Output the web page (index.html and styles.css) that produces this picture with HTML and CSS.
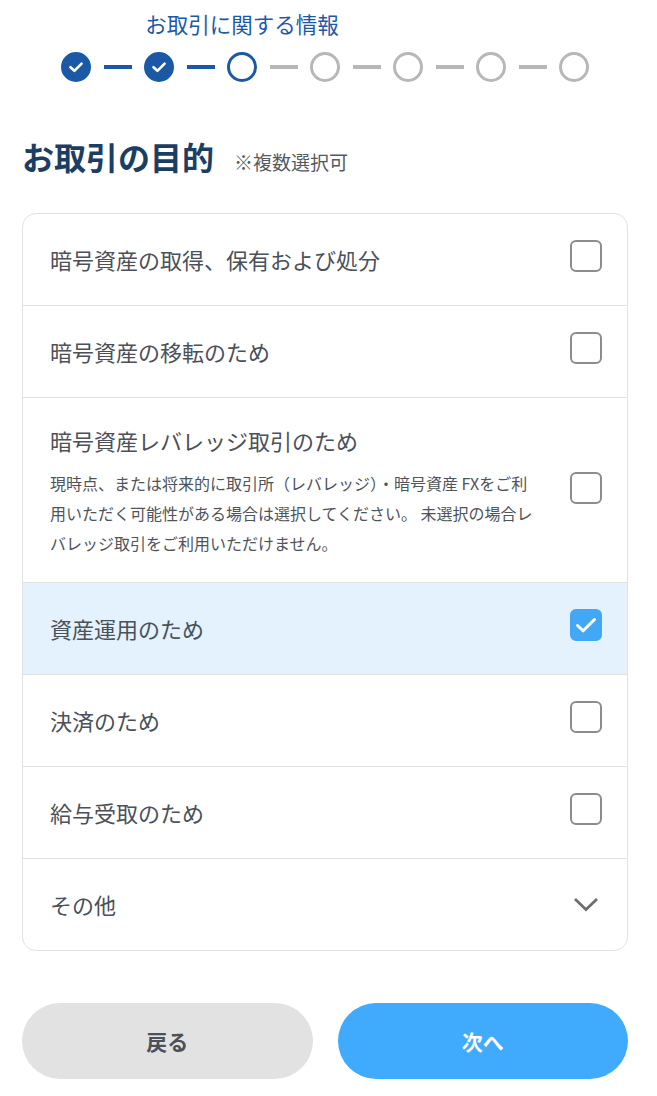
FILE: index.html
```html
<!DOCTYPE html>
<html lang="ja">
<head>
<meta charset="utf-8">
<title>お取引の目的</title>
<link rel="stylesheet" href="styles.css">
</head>
<body>
<main class="page">
  <div class="stepper">
    <div class="step done"><svg viewBox="0 0 30 30" class="step-check"><path d="M9.5 15.2 L13.4 18.8 L20.6 11.6"/></svg></div>
    <div class="bar done"></div>
    <div class="step done"><svg viewBox="0 0 30 30" class="step-check"><path d="M9.5 15.2 L13.4 18.8 L20.6 11.6"/></svg></div>
    <div class="bar done"></div>
    <div class="step current"><span class="step-label">お取引に関する情報</span></div>
    <div class="bar"></div>
    <div class="step"></div>
    <div class="bar"></div>
    <div class="step"></div>
    <div class="bar"></div>
    <div class="step"></div>
    <div class="bar"></div>
    <div class="step"></div>
  </div>

  <div class="heading">
    <h1 class="heading-title">お取引の目的</h1>
    <span class="heading-note">※複数選択可</span>
  </div>

  <div class="card">
    <div class="row">
      <span class="row-text">暗号資産の取得、保有および処分</span>
      <span class="checkbox"></span>
    </div>
    <div class="row">
      <span class="row-text">暗号資産の移転のため</span>
      <span class="checkbox"></span>
    </div>
    <div class="row row-tall">
      <div class="row-body">
        <div class="row-text row-title">暗号資産レバレッジ取引のため</div>
        <p class="row-desc">現時点、または将来的に取引所（レバレッジ）・暗号資産 FXをご利用いただく可能性がある場合は選択してください。 未選択の場合レバレッジ取引をご利用いただけません。</p>
      </div>
      <span class="checkbox"></span>
    </div>
    <div class="row selected">
      <span class="row-text">資産運用のため</span>
      <span class="checkbox checked"><svg viewBox="0 0 32 32"><path d="M7.5 16.5 L13.2 21.8 L24.5 10.5"/></svg></span>
    </div>
    <div class="row">
      <span class="row-text">決済のため</span>
      <span class="checkbox"></span>
    </div>
    <div class="row">
      <span class="row-text">給与受取のため</span>
      <span class="checkbox"></span>
    </div>
    <div class="row">
      <span class="row-text">その他</span>
      <span class="chevron"><svg viewBox="0 0 32 32"><path d="M6 11 L16 20.5 L26 11"/></svg></span>
    </div>
  </div>

  <div class="actions">
    <button class="btn btn-back" type="button">戻る</button>
    <button class="btn btn-next" type="button">次へ</button>
  </div>
</main>
</body>
</html>
```

FILE: styles.css
```css
* {
  box-sizing: border-box;
}

html, body {
  margin: 0;
  padding: 0;
  background: #ffffff;
}

body {
  font-family: "Noto Sans CJK JP", "Noto Sans", sans-serif;
  color: #4b5059;
}

.page {
  width: 657px;
  padding: 52px 29px 0 22px;
}

/* stepper */
.stepper {
  display: flex;
  align-items: center;
  justify-content: center;
  gap: 12.5px;
  height: 30px;
}

.step {
  position: relative;
  width: 30px;
  height: 30px;
  flex: none;
  border-radius: 50%;
  border: 3px solid #b7b7b7;
  background: #ffffff;
}

.step.done {
  border-color: #1b58a6;
  background: #1b58a6;
}

.step.current {
  border-color: #1b58a6;
}

.step-check {
  position: absolute;
  left: -3px;
  top: -3px;
  width: 30px;
  height: 30px;
}

.step-check path {
  fill: none;
  stroke: #ffffff;
  stroke-width: 2.6;
  stroke-linecap: round;
  stroke-linejoin: round;
}

.step-label {
  position: absolute;
  left: 50%;
  bottom: calc(100% + 16px);
  transform: translateX(-50%);
  white-space: nowrap;
  font-size: 21.5px;
  line-height: 30px;
  color: #1b5aa8;
}

.bar {
  width: 28px;
  height: 4px;
  flex: none;
  background: #b7b7b7;
}

.bar.done {
  background: #1b58a6;
}

/* heading */
.heading {
  display: flex;
  align-items: baseline;
  gap: 20px;
  margin-top: 52px;
}

.heading-title {
  margin: 0;
  font-size: 32px;
  line-height: 44px;
  font-weight: 700;
  color: #1c3e64;
}

.heading-note {
  font-size: 19px;
  color: #555a61;
}

/* card */
.card {
  margin-top: 35px;
  border: 1px solid #e2e2e2;
  border-radius: 14px;
  overflow: hidden;
}

.row {
  display: flex;
  align-items: center;
  justify-content: space-between;
  gap: 30px;
  min-height: 91px;
  padding: 0 25px 0 27px;
}

.row + .row {
  border-top: 1px solid #e2e2e2;
  min-height: 92px;
}

.row.selected {
  background: #e4f2fe;
}

.row-tall {
  padding-top: 26px;
  padding-bottom: 24px;
}

.row-body {
  flex: 1;
  min-width: 0;
}

.row-text {
  font-size: 22px;
  line-height: 33px;
  color: #4b5059;
}

.row-title {
  margin-bottom: 11px;
}

.row-desc {
  margin: 0;
  font-size: 16px;
  line-height: 30px;
  color: #4f545b;
}

.checkbox {
  width: 32px;
  height: 32px;
  flex: none;
  margin-bottom: 7px;
  border: 2px solid #8c8c8c;
  border-radius: 6px;
  background: #ffffff;
}

.checkbox.checked {
  border-color: #42a8f6;
  background: #42a8f6;
  position: relative;
}

.checkbox svg {
  position: absolute;
  left: -2px;
  top: -2px;
  width: 32px;
  height: 32px;
}

.checkbox svg path {
  fill: none;
  stroke: #ffffff;
  stroke-width: 3;
  stroke-linecap: round;
  stroke-linejoin: round;
}

.chevron {
  width: 32px;
  height: 32px;
  flex: none;
}

.chevron svg {
  display: block;
  width: 32px;
  height: 32px;
}

.chevron path {
  fill: none;
  stroke: #6e6e6e;
  stroke-width: 2.8;
  stroke-linecap: square;
}

/* actions */
.actions {
  display: flex;
  gap: 25px;
  margin-top: 52px;
}

.btn {
  flex: 1;
  height: 76px;
  border: none;
  border-radius: 38px;
  font-family: "Noto Sans CJK JP", "Noto Sans", sans-serif;
  font-size: 21px;
  font-weight: 700;
  cursor: pointer;
}

.btn-back {
  background: #e2e2e2;
  color: #4b5059;
}

.btn-next {
  background: #40abfc;
  color: #ffffff;
}
```
